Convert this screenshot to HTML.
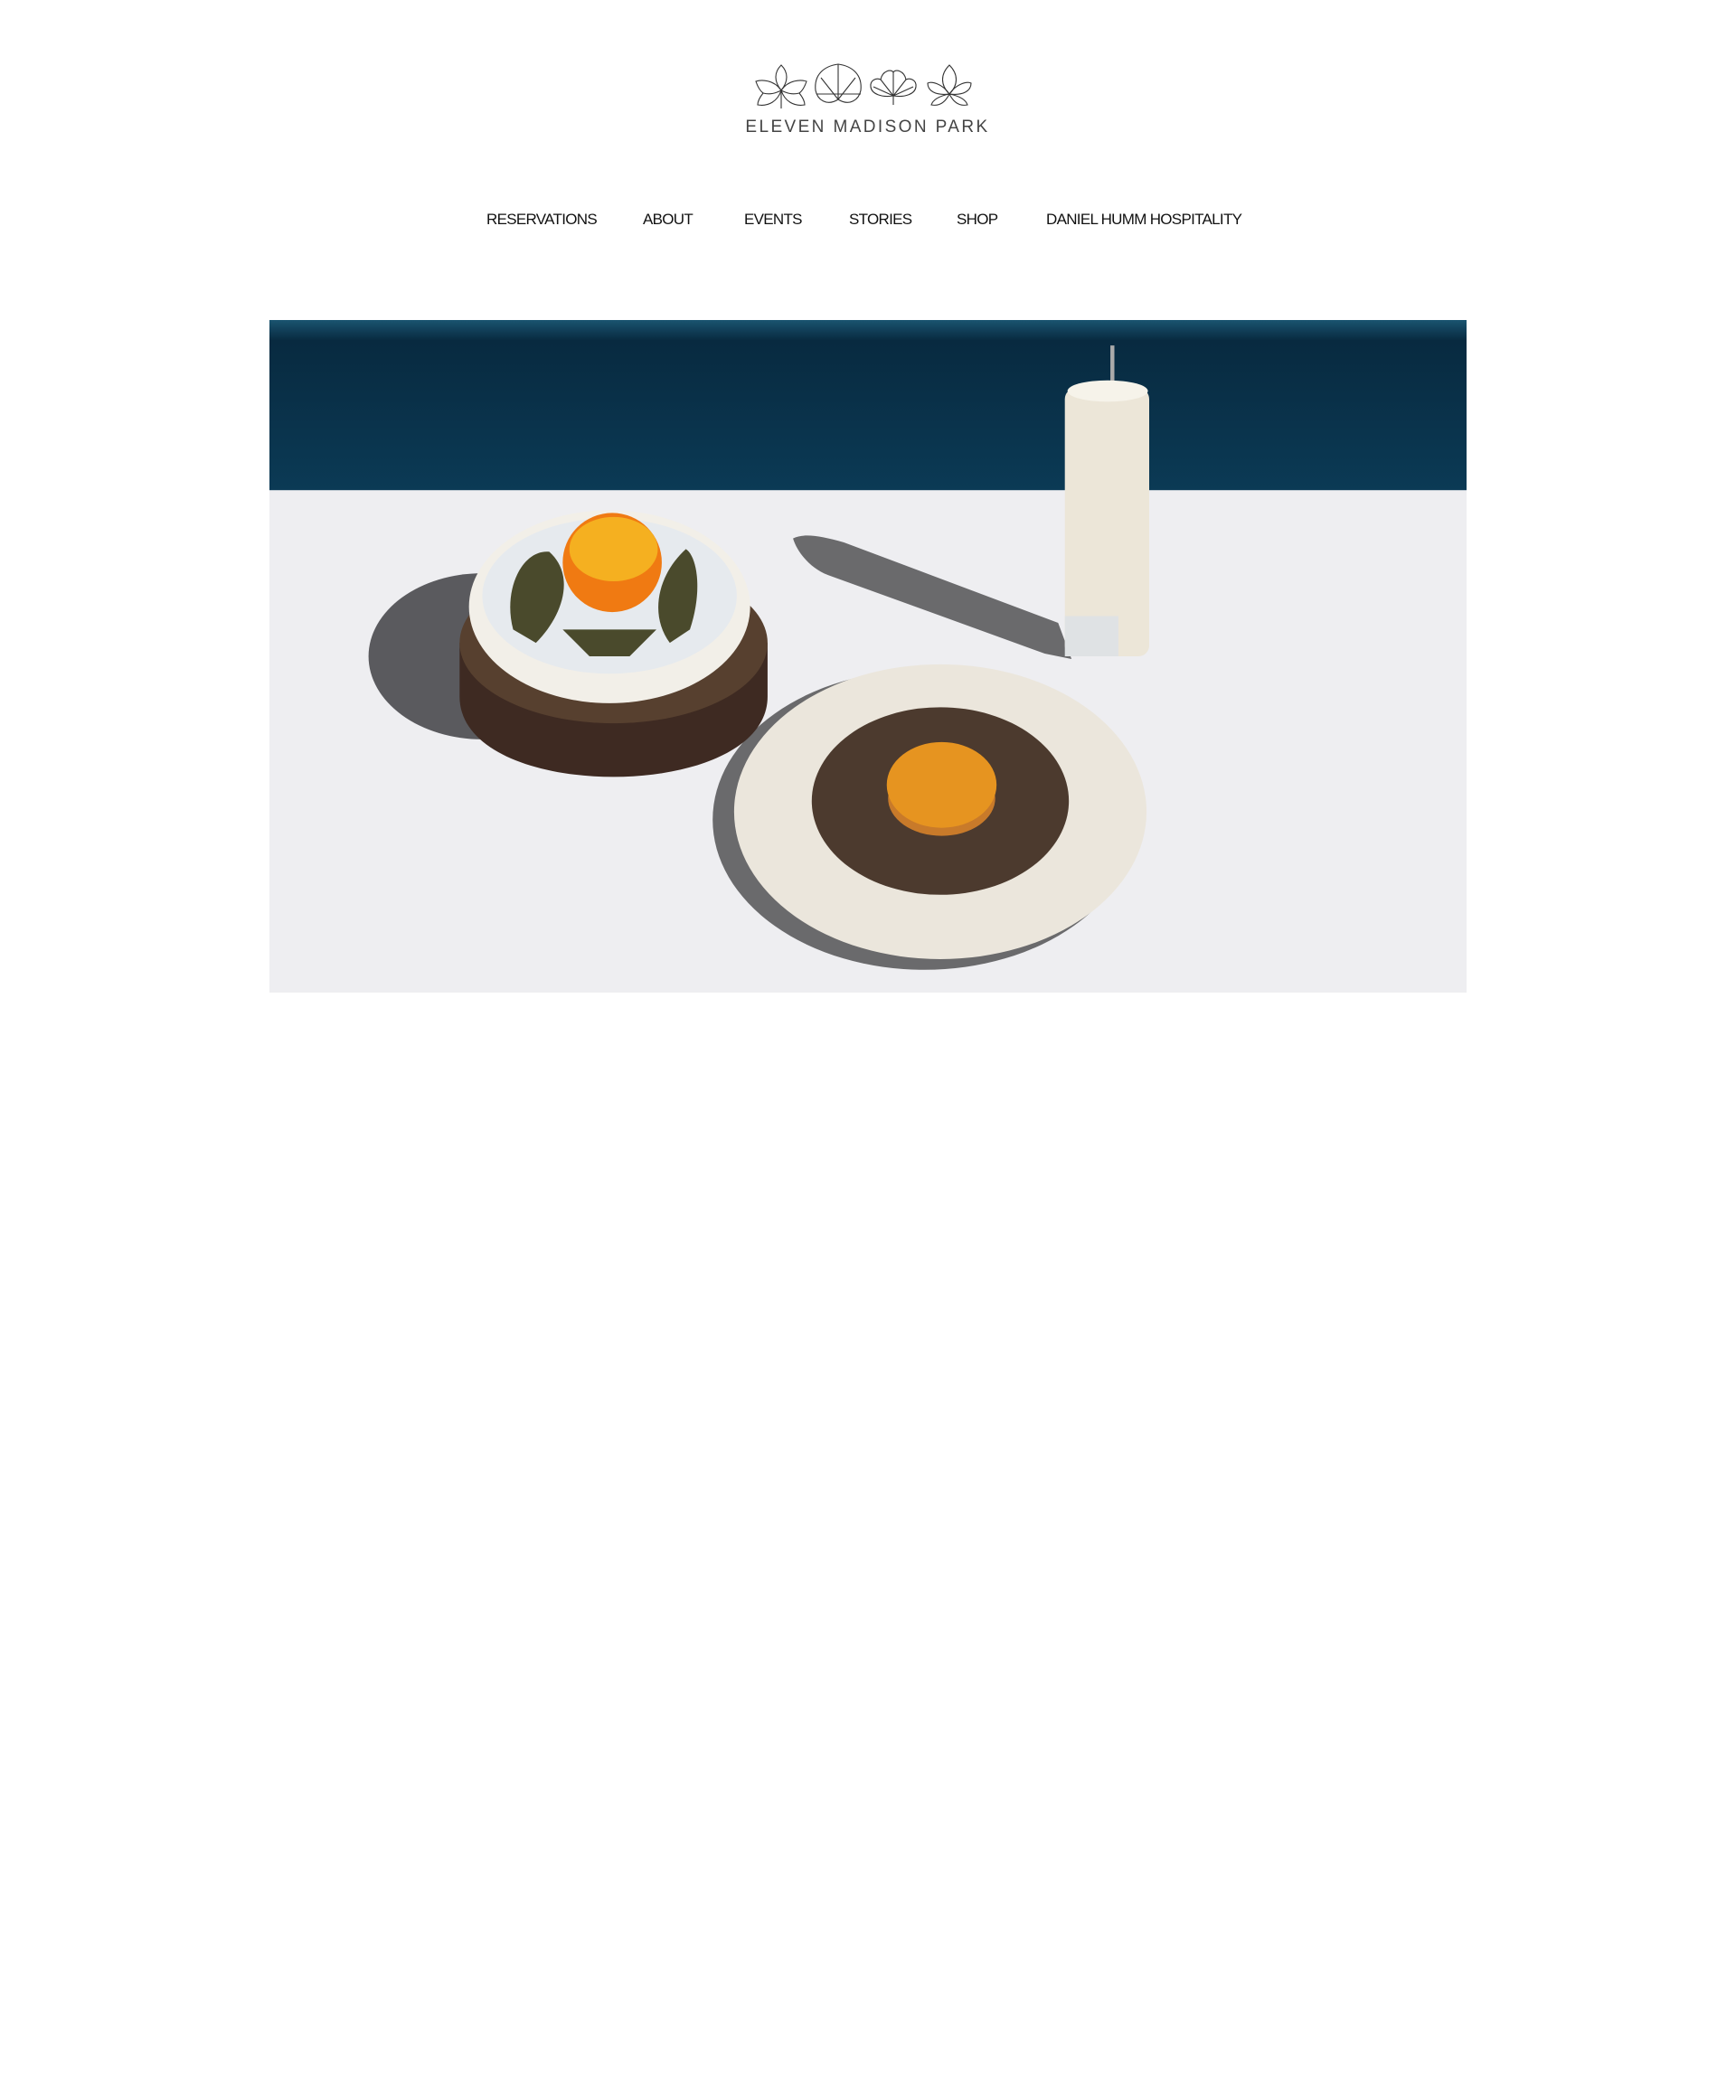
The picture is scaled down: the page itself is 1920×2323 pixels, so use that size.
<!DOCTYPE html>
<html><head><meta charset="utf-8"><style>
html,body{margin:0;padding:0;background:#fff;}
body{width:1920px;height:2323px;position:relative;overflow:hidden;font-family:"Liberation Sans",sans-serif;}
.nav a{position:absolute;top:233px;font-size:17px;color:#111;text-decoration:none;letter-spacing:-0.7px;white-space:nowrap;}
.logo-text{position:absolute;left:818px;top:130px;width:283px;text-align:center;font-size:19px;letter-spacing:2.4px;color:#444;white-space:nowrap;}
</style></head><body>
<svg style="position:absolute;left:830px;top:68px" width="260" height="55" viewBox="0 0 260 55" fill="none" stroke="#333" stroke-width="1.1">
 <path d="M34 4 C26 12 26 22 34 32 C42 22 42 12 34 4Z"/>
 <path d="M34 32 C26 20 12 20 6 22 C8 28 10 32 14 35 C10 40 8 44 8 48 C20 50 30 44 34 32Z"/>
 <path d="M34 32 C42 20 56 20 62 22 C60 28 58 32 54 35 C58 40 60 44 60 48 C48 50 38 44 34 32Z"/>
 <path d="M34 32 L34 52 M14 35 C22 37 28 35 34 32 M54 35 C46 37 40 35 34 32"/>
 <path d="M97 3 C82 5 70 14 72 32 C74 42 84 50 97 42 C110 50 120 42 122 32 C124 14 112 5 97 3Z"/>
 <path d="M97 3 L97 42 M73 36 L122 36 M97 42 L78 18 M97 42 L116 18"/>
 <path d="M158 38 C145 40 134 36 133 28 C132 20 140 18 144 20 C146 10 156 8 158 12 C160 8 170 10 172 20 C176 18 184 20 183 28 C182 36 171 40 158 38Z"/>
 <path d="M158 38 L158 12 M158 38 L144 20 M158 38 L172 20 M158 38 L136 28 M158 38 L180 28 M158 38 L158 48"/>
 <path d="M220 4 C210 14 210 26 220 36 C230 26 230 14 220 4Z"/>
 <path d="M220 36 C212 24 200 22 196 24 C196 32 204 38 220 36Z"/>
 <path d="M220 36 C228 24 240 22 244 24 C244 32 236 38 220 36Z"/>
 <path d="M220 36 C210 38 202 42 200 48 C210 50 216 44 220 36Z"/>
 <path d="M220 36 C230 38 238 42 240 48 C230 50 224 44 220 36Z"/>
</svg>
<div class="logo-text">ELEVEN MADISON PARK</div>
<div class="nav">
 <a style="left:538px">RESERVATIONS</a>
 <a style="left:711px">ABOUT</a>
 <a style="left:823px">EVENTS</a>
 <a style="left:939px">STORIES</a>
 <a style="left:1058px">SHOP</a>
 <a style="left:1157px">DANIEL HUMM HOSPITALITY</a>
</div>
<svg style="position:absolute;left:298px;top:354px" width="1324" height="744" viewBox="201 239 894 502" preserveAspectRatio="none">
 <defs>
  <linearGradient id="nv" x1="0" y1="0" x2="0" y2="1"><stop offset="0" stop-color="#1a5470"/><stop offset="0.12" stop-color="#082a40"/><stop offset="1" stop-color="#0b3a55"/></linearGradient>
 </defs>
 <rect x="201" y="366" width="894" height="375" fill="#eeeef1"/>
 <rect x="201" y="239" width="894" height="127" fill="url(#nv)"/>
 <ellipse cx="360" cy="490" rx="85" ry="62" fill="#5a5a5e"/>
 <path d="M592 402 C600 398 612 400 630 405 L790 465 L800 492 L780 488 L620 430 C605 425 595 412 592 402Z" fill="#6a6a6c"/>
 <ellipse cx="690" cy="612" rx="158" ry="112" fill="#6a6a6c"/>
 <path d="M343 480 L343 520 C343 560 400 580 458 580 C515 580 573 560 573 520 L573 480Z" fill="#3e2a22"/>
 <ellipse cx="458" cy="480" rx="115" ry="60" fill="#57402f"/>
 <ellipse cx="455" cy="453" rx="105" ry="72" fill="#f2efe8"/>
 <ellipse cx="455" cy="445" rx="95" ry="58" fill="#e6eaee"/>
 <path d="M383 470 C375 440 390 410 410 412 C430 430 420 460 400 480Z" fill="#4a4a2c"/>
 <path d="M515 470 C525 440 520 415 512 410 C490 430 485 460 500 480Z" fill="#4a4a2c"/>
 <path d="M420 470 L490 470 L470 490 L440 490Z" fill="#4a4a2c"/>
 <circle cx="457" cy="420" r="37" fill="#f07a12"/>
 <ellipse cx="458" cy="410" rx="33" ry="24" fill="#f5b020"/>
 <rect x="829" y="258" width="3" height="45" fill="#aaa"/>
 <rect x="795" y="290" width="63" height="200" rx="8" fill="#ece6d8"/>
 <ellipse cx="827" cy="292" rx="30" ry="8" fill="#f6f3ea"/>
 <rect x="795" y="460" width="40" height="30" fill="#dfe2e4"/>
 <ellipse cx="702" cy="606" rx="154" ry="110" fill="#ebe6dc"/>
 <ellipse cx="702" cy="598" rx="96" ry="70" fill="#4c3a2e"/>
 <ellipse cx="703" cy="596" rx="40" ry="28" fill="#c87a2a"/>
 <ellipse cx="703" cy="586" rx="41" ry="32" fill="#e69420"/>
</svg>
</body></html>
